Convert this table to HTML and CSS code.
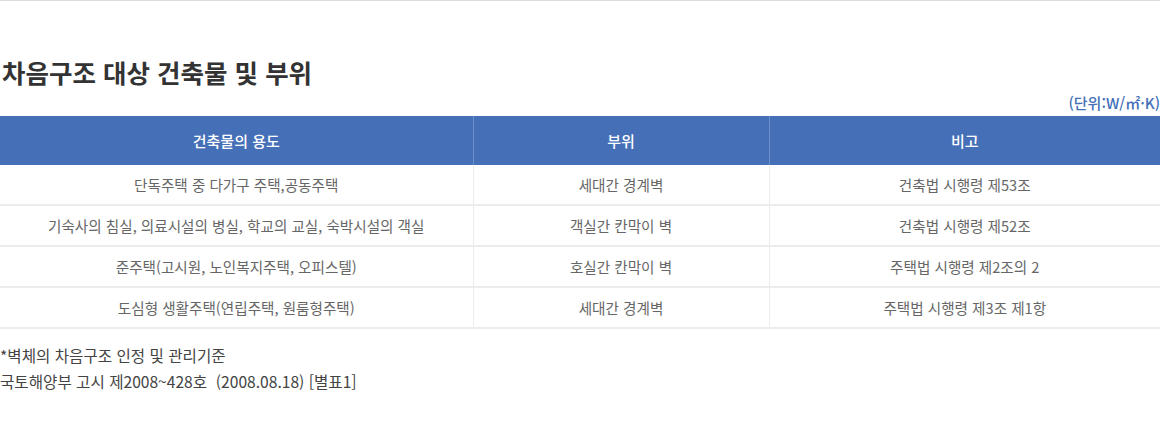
FILE: index.html
```html
<!DOCTYPE html>
<html lang="ko">
<head>
    <meta charset="utf-8">
    <title>차음구조 대상 건축물 및 부위</title>
    <link rel="stylesheet" href="styles.css">
</head>
<body>
    <div class="section">
        <h2 class="title">차음구조 대상 건축물 및 부위</h2>
        <p class="unit">(단위:W/㎡·K)</p>

        <table class="tbl">
            <colgroup>
                <col class="col-use">
                <col class="col-part">
                <col class="col-note">
            </colgroup>
            <thead>
                <tr>
                    <th>건축물의 용도</th>
                    <th>부위</th>
                    <th>비고</th>
                </tr>
            </thead>
            <tbody>
                <tr>
                    <td>단독주택 중 다가구 주택,공동주택</td>
                    <td>세대간 경계벽</td>
                    <td>건축법 시행령 제53조</td>
                </tr>
                <tr>
                    <td>기숙사의 침실, 의료시설의 병실, 학교의 교실, 숙박시설의 객실</td>
                    <td>객실간 칸막이 벽</td>
                    <td>건축법 시행령 제52조</td>
                </tr>
                <tr>
                    <td>준주택(고시원, 노인복지주택, 오피스텔)</td>
                    <td>호실간 칸막이 벽</td>
                    <td>주택법 시행령 제2조의 2</td>
                </tr>
                <tr>
                    <td>도심형 생활주택(연립주택, 원룸형주택)</td>
                    <td>세대간 경계벽</td>
                    <td>주택법 시행령 제3조 제1항</td>
                </tr>
            </tbody>
        </table>

        <div class="source">
            <p>*벽체의 차음구조 인정 및 관리기준</p>
            <p>국토해양부 고시 제2008~428호&nbsp; (2008.08.18) [별표1]</p>
        </div>
    </div>
</body>
</html>
```

FILE: styles.css
```css
body {
    margin: 0;
    padding: 0;
    font-family: "Noto Sans CJK KR", "Noto Sans", sans-serif;
    color: #333;
    background: #fff;
}
.section {
    border-top: 1px solid #dcdcdc;
    padding-top: 55px;
}
.title {
    margin: 0;
    padding-left: 2px;
    font-size: 25.5px;
    font-weight: bold;
    line-height: 32px;
    color: #333;
}
.unit {
    margin: 0;
    padding-top: 2px;
    text-align: right;
    font-size: 15px;
    font-weight: 500;
    line-height: 26px;
    color: #4470b8;
}
.tbl {
    width: 100%;
    border-collapse: collapse;
    table-layout: fixed;
}
.col-use { width: 473px; }
.col-part { width: 296px; }
.tbl th {
    height: 49px;
    padding: 0;
    background: #4570b8;
    color: #fff;
    font-size: 15px;
    font-weight: 500;
    border-left: 1px solid #6d8fc9;
}
.tbl th:first-child,
.tbl td:first-child {
    border-left: none;
}
.tbl td {
    height: 39px;
    padding: 0;
    text-align: center;
    font-size: 14.6px;
    color: #666;
    border-bottom: 2px solid #ececec;
    border-left: 1px solid #ececec;
}
.source {
    padding-top: 13px;
}
.source p {
    margin: 0;
    font-size: 15.6px;
    line-height: 26px;
    color: #444;
}
```
